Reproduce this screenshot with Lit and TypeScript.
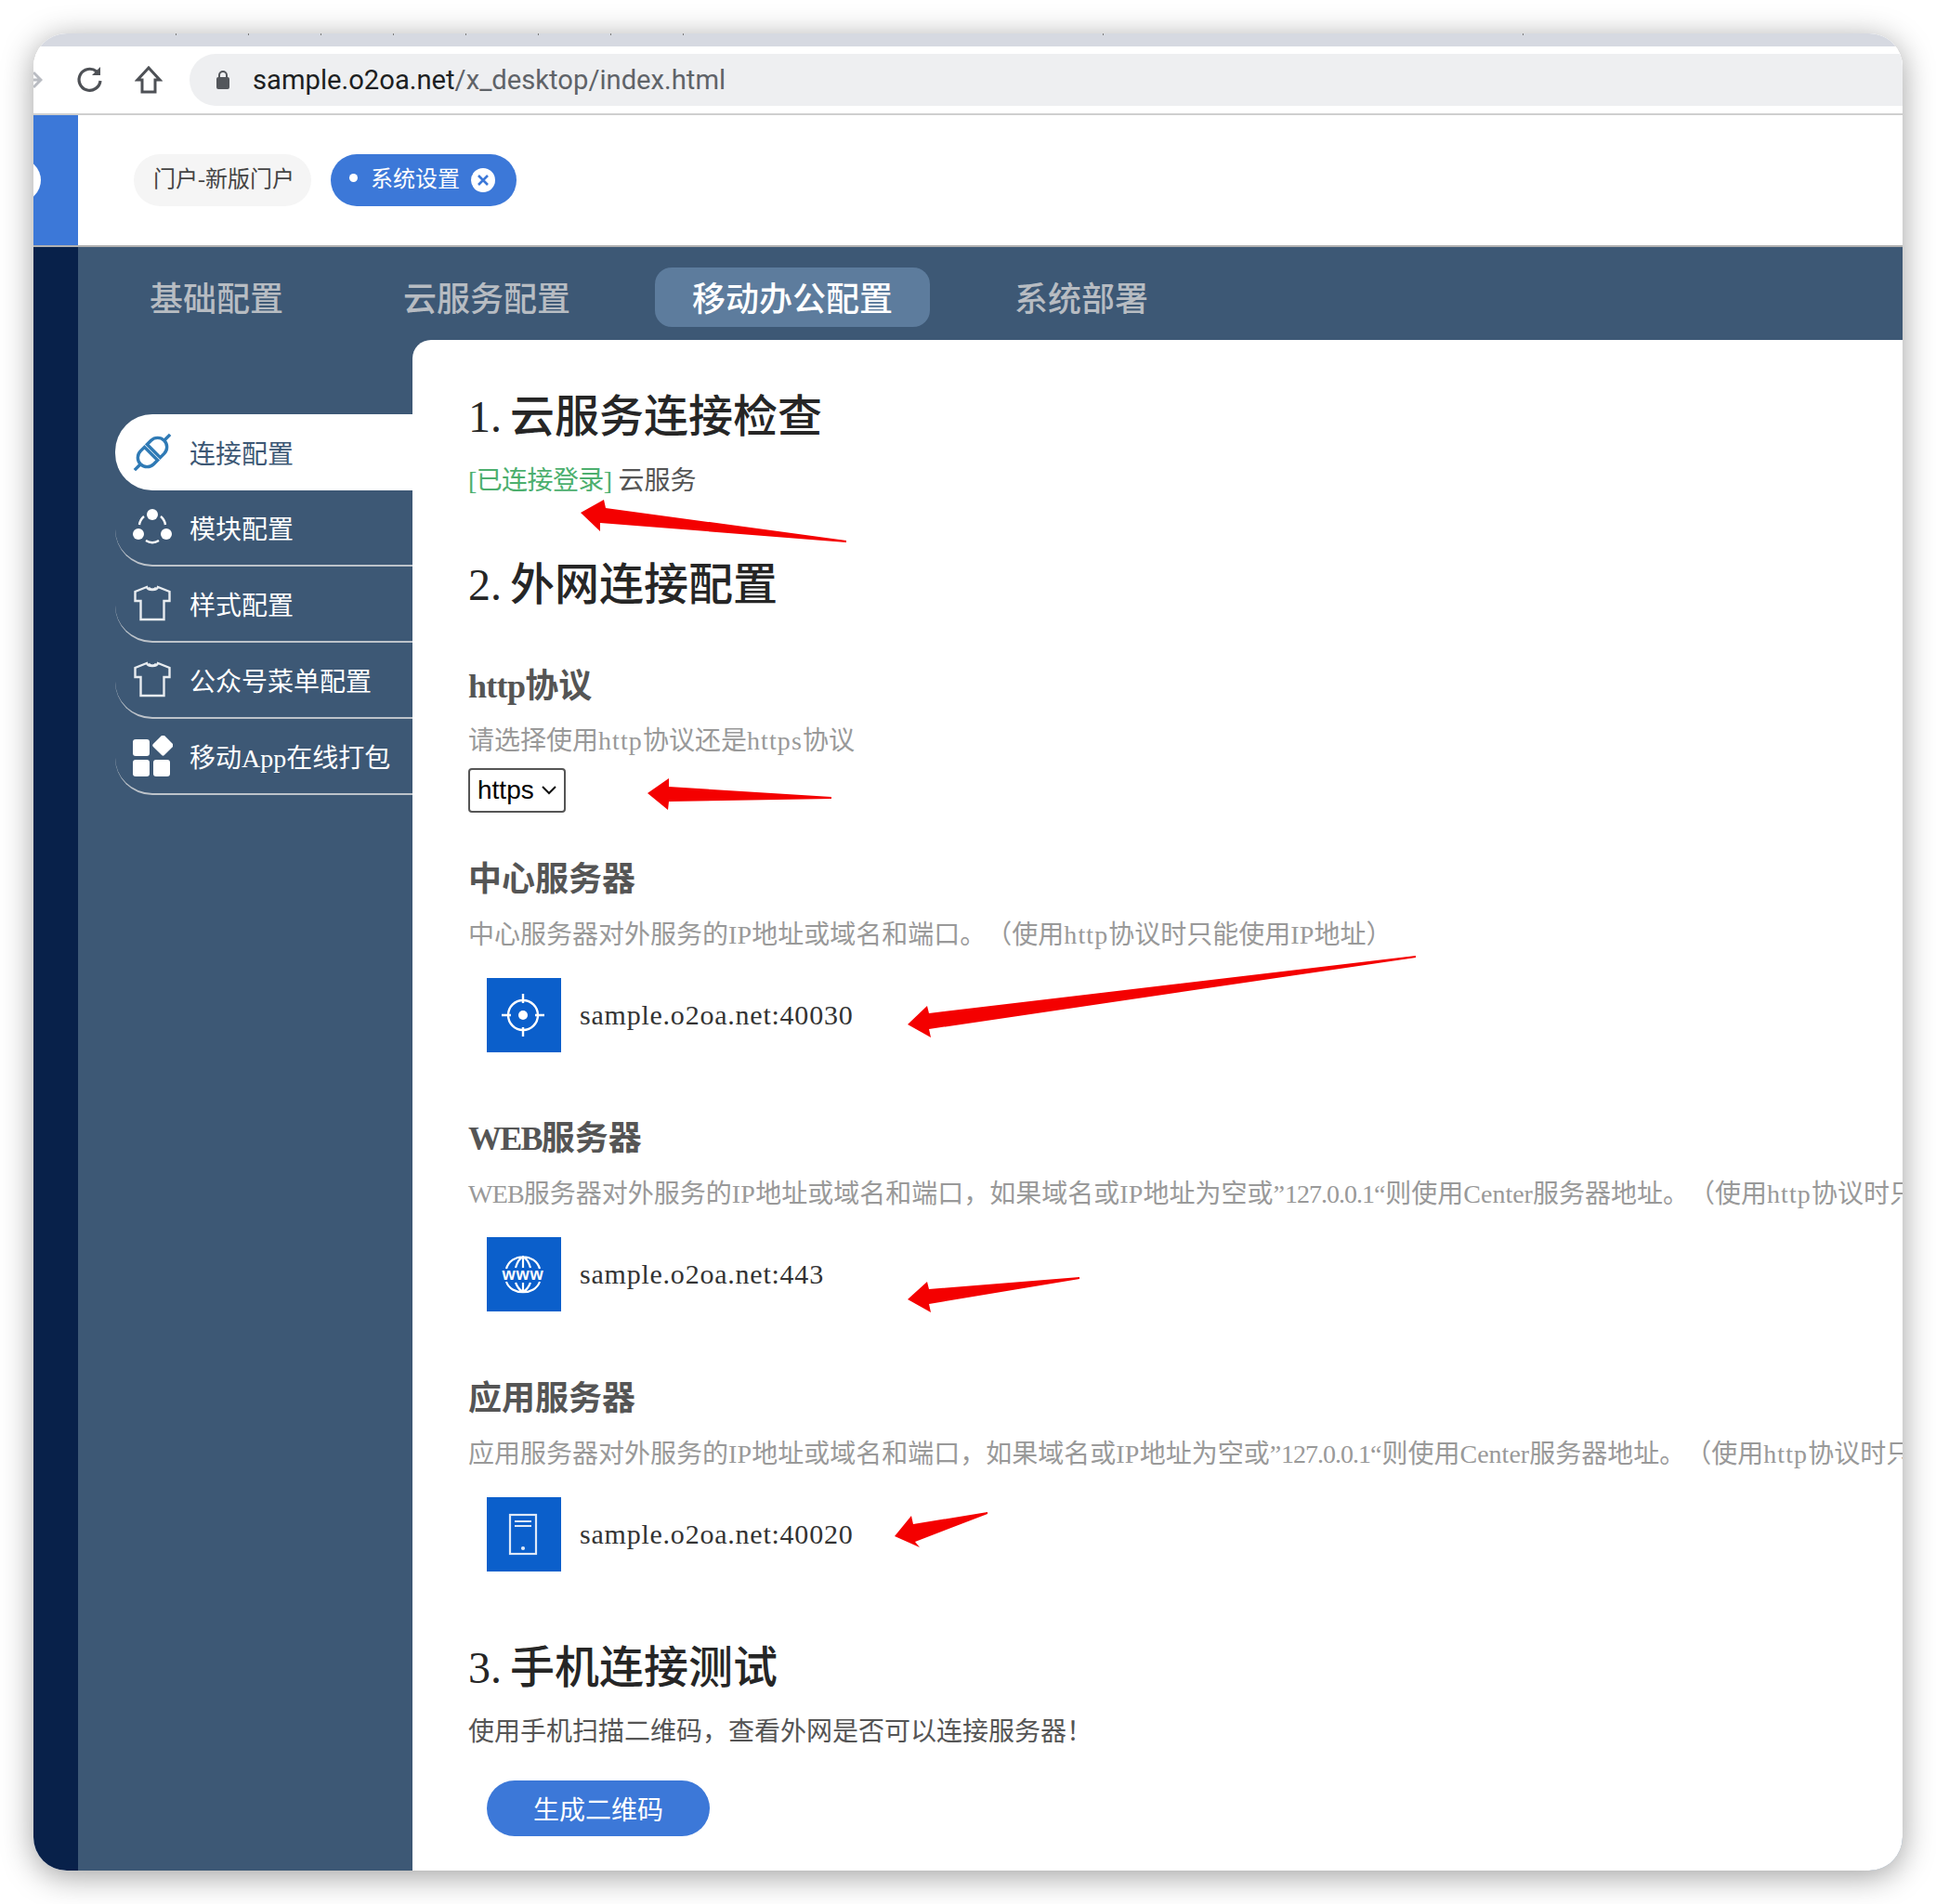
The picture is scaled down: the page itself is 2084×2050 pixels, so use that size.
import { LitElement, html, css, svg } from "lit";
import { customElement } from "lit/decorators.js";

const menu = [
  { t: "连接配置", i: "plug", a: true },
  { t: "模块配置", i: "mod" },
  { t: "样式配置", i: "shirt" },
  { t: "公众号菜单配置", i: "shirt" },
  { t: "移动App在线打包", i: "apps" },
];

function menuIcon(k: string) {
  if (k === "plug")
    return html`<svg width="44" height="44" viewBox="0 0 44 44" fill="none" stroke="#2f7ab5" stroke-width="3.4"><g transform="rotate(-45 22 22)"><path d="M-5 22H4M40 22H49"/><path d="M20 12H14a10 10 0 0 0 0 20H20Z"/><path d="M24 12H30a10 10 0 0 1 0 20H24Z"/></g></svg>`;
  if (k === "mod")
    return html`<svg width="44" height="44" viewBox="0 0 44 44" fill="#fff" stroke="none"><circle cx="22" cy="8" r="6"/><circle cx="7" cy="29" r="6"/><circle cx="37" cy="29" r="6"/><path d="M13 10a14 14 0 0 0-5 9M31 10a14 14 0 0 1 5 9M15 36a13 13 0 0 0 14 0" fill="none" stroke="#fff" stroke-width="2.4"/></svg>`;
  if (k === "shirt")
    return html`<svg width="44" height="44" viewBox="0 0 44 44" fill="none" stroke="#e8ecf0" stroke-width="2.4"><path d="M16 4L3.500 9v10h6v20h25V19h6V9L28 4c-1 4-11 4-12 0z"/><path d="M18 4.500c1 3 7 3 8 0"/></svg>`;
  return html`<svg width="44" height="44" viewBox="0 0 44 44" fill="#fff"><rect x="1" y="4" width="18" height="18" rx="3"/><rect x="25" y="2" width="17" height="17" rx="2" transform="rotate(45 33.500 10.500)"/><rect x="1" y="26" width="18" height="18" rx="3"/><rect x="23" y="26" width="18" height="18" rx="3"/></svg>`;
}

const targetIcon = html`<svg width="46" height="46" viewBox="0 0 46 46" fill="none" stroke="#fff" stroke-width="2.4"><circle cx="23" cy="23" r="16"/><circle cx="23" cy="23" r="5" fill="#fff" stroke="none"/><path d="M23 0v10M23 36v10M0 23h10M36 23h10"/></svg>`;
const wwwIcon = html`<svg width="46" height="46" viewBox="0 0 46 46" fill="none" stroke="#fff" stroke-width="2.2"><path d="M5 17C10 0 36 0 41 17M15 16c2-7 4-10 8-12 4 2 6 5 8 12M23 4v12M5 31C10 46 36 46 41 31M15 32c2 5 4 8 8 10 4-2 6-5 8-10M23 32v10"/><text x="23" y="29" fill="#fff" stroke="none" font-family="Liberation Sans, sans-serif" font-weight="700" font-size="18" text-anchor="middle" textLength="45" lengthAdjust="spacingAndGlyphs">www</text></svg>`;
const deviceIcon = html`<svg width="46" height="46" viewBox="0 0 46 46" fill="none" stroke="#dfe9f8" stroke-width="2.2"><rect x="9" y="2" width="28" height="42"/><path d="M14 9h18M14 14h18"/><circle cx="23" cy="38" r="1" fill="#fff"/></svg>`;

/** Latin runs in the reference's serif are spaced a little differently from Liberation Serif. */
function lat(s: string) {
  return s.split(/([A-Za-z]+|[0-9.]+)/).map((p, i) => {
    if (i % 2 === 0) return p;
    let c = "n";
    if (/^https?$/.test(p)) c = "lh";
    else if (p === "WEB") c = "lw";
    else if (p === "IP") c = "li";
    else if (p === "Center") c = "lc";
    return html`<span class=${c}>${p}</span>`;
  });
}

@customElement("app-root")
export class AppRoot extends LitElement {
  static styles = css`
    :host { display: block; height: 2050px; background: #fff; position: relative; overflow: hidden;
      font-family: "Liberation Serif", "Noto Sans CJK SC", serif; text-spacing-trim: space-all; }
    .win { position: absolute; left: 36px; top: 36px; width: 2012px; height: 1978px; border-radius: 36px; overflow: hidden;
      display: flex; flex-direction: column; background: #fff; }
    .shadow { position: absolute; left: 36px; top: 36px; width: 2012px; height: 1978px; border-radius: 36px;
      box-shadow: 0 6px 34px rgba(0,0,0,.38); }
    .strip { height: 14px; flex: none;
      background:
        repeating-linear-gradient(90deg, #7d7d7d 0 1px, transparent 1px 78px) 153px 0 / 555px 2px no-repeat,
        linear-gradient(#7d7d7d, #7d7d7d) 1151px 0 / 1px 2px no-repeat,
        linear-gradient(#7d7d7d, #7d7d7d) 1603px 0 / 1px 2px no-repeat,
        #d6d9e1; }
    .toolbar { height: 72px; flex: none; display: flex; align-items: center; border-bottom: 2px solid #cfcfcf; background: #fff; }
    .fwd { width: 10px; height: 30px; flex: none; margin-right: 35px; color: #b9bcc2; }
    .tbtn { flex: none; display: flex; width: 32px; justify-content: center; }
    .reload { margin-right: 31px; }
    .home { margin-right: 28px; }
    .url { flex: 1; height: 56px; background: #eeeff1; border-radius: 28px 0 0 28px; display: flex; align-items: center; padding-left: 29px;
      font: 29.200px "Roboto", "Liberation Sans", sans-serif; color: #5f6368; }
    .url svg { margin-right: 25px; }
    .url b { font-weight: 400; color: #1d1f22; }
    .head { height: 140px; flex: none; display: flex; border-bottom: 2px solid #b0b0b0; box-sizing: content-box; }
    .logo { width: 48px; background: #3c78d8; flex: none; overflow: hidden; display: flex; align-items: center; }
    .logo i { display: block; flex: none; width: 46px; height: 46px; background: #fff; border-radius: 50%; margin-left: -38px; }
    .tags { display: flex; align-items: center; gap: 21px; padding-left: 60px; font-size: 24px; }
    .tag { height: 56px; border-radius: 28px; display: flex; align-items: center; box-sizing: border-box; }
    .tag.off { background: #f5f5f5; color: #444; padding: 0 21px 2px; width: 191px; white-space: nowrap; line-height: 24px; }
    .tag.on { background: #3c78d8; color: #fff; width: 200px; padding-left: 20px; white-space: nowrap; }
    .tag.on .lbl { margin-top: -2px; line-height: 24px; }
    .dot { width: 9px; height: 9px; background: #fff; border-radius: 50%; margin: -6px 14px 0 0; flex: none; }
    .x { width: 26px; height: 26px; margin-left: 12px; background: #fff; border-radius: 50%; display: flex; align-items: center; justify-content: center; flex: none; }
    .body { flex: 1; display: flex; min-height: 0; }
    .rail { width: 48px; background: #08214a; flex: none; }
    .main { flex: 1; background: #3d5875; display: flex; flex-direction: column; min-width: 0; }
    .tabs { height: 100px; flex: none; display: flex; align-items: flex-start; padding-top: 22px; box-sizing: border-box; font-size: 36px; color: #b7bcc2; padding-left: 39px; }
    .tab { height: 64px; display: flex; align-items: center; padding: 0 38px 2px; box-sizing: border-box; border-radius: 18px; white-space: nowrap; font-weight: 500; }
    .tab.cur { background: #5d7c9d; color: #fff; margin: 0 0 0 53px; padding: 0 40px 2px; }
    .tab.t2 { margin-left: 53px; }
    .tab.t4 { margin-left: 53px; }
    .lower { flex: 1; display: flex; min-height: 0; }
    .side { width: 360px; flex: none; padding: 80px 0 0 40px; box-sizing: border-box; }
    .mi { height: 82px; display: flex; align-items: center; font-size: 28px; color: #fff; border-bottom: 2px solid #bdc3ca; border-bottom-left-radius: 40px; box-sizing: border-box; padding-left: 18px; gap: 18px; white-space: nowrap; }
    .mi span { margin-top: -1px; }
    .mi.a { background: #fff; color: #3d5875; border-bottom: 0; border-radius: 40px 0 0 40px; }
    .mi svg { flex: none; }
    .content { flex: 1; background: #fff; border-top-left-radius: 20px; padding: 0 0 0 60px; overflow: hidden; white-space: nowrap; min-width: 0; }
    h1 { margin: 0; font-size: 48px; line-height: 56px; font-weight: 500; color: #262626; word-spacing: -3px; }
    h2 { margin: 0; font-size: 36px; line-height: 42px; font-weight: 700; color: #555; }
    p { margin: 0; font-size: 28px; line-height: 36px; }
    .lh { letter-spacing: 1.100px; }
    .lw { letter-spacing: -.8px; }
    .li { letter-spacing: .2px; }
    .lc { letter-spacing: 0; }
    .n { letter-spacing: -1px; }
    h2 .lw { letter-spacing: -1.800px; }
    h2 .lh { letter-spacing: -.7px; }
    .desc { color: #999; }
    .ok { color: #4caf6e; letter-spacing: -.6px; }
    .dark { color: #555; }
    .h1a { margin-top: 55px; }
    .status { margin-top: 23px; }
    .h1b { margin-top: 66px; }
    .h2a { margin-top: 60px; }
    .d1 { margin-top: 20px; }
    .select { margin-top: 11px; width: 105px; height: 48px; box-sizing: border-box; border: 2px solid #555; border-radius: 4px; display: flex; align-items: center; gap: 7px; padding-left: 8px;
      font: 28px "Liberation Sans", sans-serif; color: #000; }
    .h2b { margin-top: 51px; }
    .d2 { margin-top: 21px; }
    .field { margin: 28px 0 0 20px; display: flex; align-items: center; gap: 20px; font-size: 30px; color: #333; letter-spacing: .77px; }
    .sq { width: 80px; height: 80px; background: #0b5fcb; display: flex; align-items: center; justify-content: center; flex: none; }
    .sq svg { margin: -1px 2px 0 0; }
    .h2c { margin-top: 72px; }
    .h2d { margin-top: 73px; }
    .h1c { margin-top: 76px; }
    .d3 { margin-top: 23px; color: #555; }
    .btn { margin: 34px 0 0 20px; width: 240px; height: 60px; border-radius: 30px; background: #3c78d8; color: #fff; font-size: 28px; display: flex; align-items: center; justify-content: center; }
    .arrows { position: absolute; inset: 0; pointer-events: none; }
  `;

  render() {
    return html`
      <div class="shadow"></div>
      <div class="win">
        <div class="strip"></div>
        <div class="toolbar">
          <svg class="fwd" viewBox="0 0 10 30" fill="none" stroke="currentColor" stroke-width="3"><path d="M-6 15h12M0 7l8 8-8 8"/></svg>
          <span class="tbtn reload"><svg width="32" height="32" viewBox="0 0 32 32" fill="none" stroke="#4e5156" stroke-width="3.200"><path d="M27 17a11.500 11.500 0 1 1-4-10"/><path d="M27 2v9h-9" fill="#4e5156" stroke="none"/></svg></span>
          <span class="tbtn home"><svg width="30" height="32" viewBox="0 0 30 32" fill="none" stroke="#4e5156" stroke-width="3"><path d="M15 3L3 16h5v13h14V16h5z"/></svg></span>
          <div class="url">
            <svg width="14" height="22" viewBox="0 0 14 22"><path d="M3 9V6a4 4 0 0 1 8 0v3" fill="none" stroke="#53565b" stroke-width="2"/><rect x="0" y="8" width="14" height="13" rx="2" fill="#53565b"/></svg>
            <span><b>sample.o2oa.net</b>/x_desktop/index.html</span>
          </div>
        </div>
        <div class="head">
          <div class="logo"><i></i></div>
          <div class="tags">
            <div class="tag off">门户-新版门户</div>
            <div class="tag on"><span class="dot"></span><span class="lbl">系统设置</span><span class="x"><svg width="14" height="14" viewBox="0 0 14 14" fill="none" stroke="#3c78d8" stroke-width="2.600"><path d="M2 2l10 10M12 2L2 12"/></svg></span></div>
          </div>
        </div>
        <div class="body">
          <div class="rail"></div>
          <div class="main">
            <div class="tabs">
              <div class="tab">基础配置</div>
              <div class="tab t2">云服务配置</div>
              <div class="tab cur">移动办公配置</div>
              <div class="tab t4">系统部署</div>
            </div>
            <div class="lower">
              <div class="side">
                ${menu.map((m) => html`<div class="mi ${m.a ? "a" : ""}">${menuIcon(m.i)}<span>${m.t}</span></div>`)}
              </div>
              <div class="content">
                <h1 class="h1a">1. 云服务连接检查</h1>
                <p class="status"><span class="ok">[已连接登录]</span> <span class="dark">云服务</span></p>
                <h1 class="h1b">2. 外网连接配置</h1>
                <h2 class="h2a">${lat("http协议")}</h2>
                <p class="desc d1">${lat("请选择使用http协议还是https协议")}</p>
                <div class="select"><span>https</span><svg width="18" height="10" viewBox="0 0 18 10" fill="none" stroke="#111" stroke-width="2"><path d="M2 1l7 7 7-7"/></svg></div>
                <h2 class="h2b">中心服务器</h2>
                <p class="desc d2">${lat("中心服务器对外服务的IP地址或域名和端口。（使用http协议时只能使用IP地址）")}</p>
                <div class="field"><span class="sq">${targetIcon}</span><span>sample.o2oa.net:40030</span></div>
                <h2 class="h2c">${lat("WEB服务器")}</h2>
                <p class="desc d2">${lat("WEB服务器对外服务的IP地址或域名和端口，如果域名或IP地址为空或”127.0.0.1“则使用Center服务器地址。（使用http协议时只能使用IP地址）")}</p>
                <div class="field"><span class="sq">${wwwIcon}</span><span>sample.o2oa.net:443</span></div>
                <h2 class="h2d">应用服务器</h2>
                <p class="desc d2">${lat("应用服务器对外服务的IP地址或域名和端口，如果域名或IP地址为空或”127.0.0.1“则使用Center服务器地址。（使用http协议时只能使用IP地址）")}</p>
                <div class="field"><span class="sq">${deviceIcon}</span><span>sample.o2oa.net:40020</span></div>
                <h1 class="h1c">3. 手机连接测试</h1>
                <p class="d3">使用手机扫描二维码，查看外网是否可以连接服务器！</p>
                <div class="btn">生成二维码</div>
              </div>
            </div>
          </div>
        </div>
      </div>
      <svg class="arrows" width="2084" height="2050" viewBox="0 0 2084 2050" fill="#f40000">
        ${svg`<polygon points="625,552 650,538 652,547 911,582 911,584 646,563 646,572"/>
        <polygon points="697,854 720,838 720,847 895,858 895,860 720,863 719,872"/>
        <polygon points="977,1103 998,1083 1000,1091 1524,1029 1524,1031 1000,1108 1002,1117"/>
        <polygon points="977,1399 998,1380 1000,1388 1162,1375 1162,1377 1000,1404 1002,1413"/>
        <polygon points="963,1654 981,1632 983,1641 1063,1628 1063,1630 985,1660 990,1666"/>`}
      </svg>
    `;
  }
}
